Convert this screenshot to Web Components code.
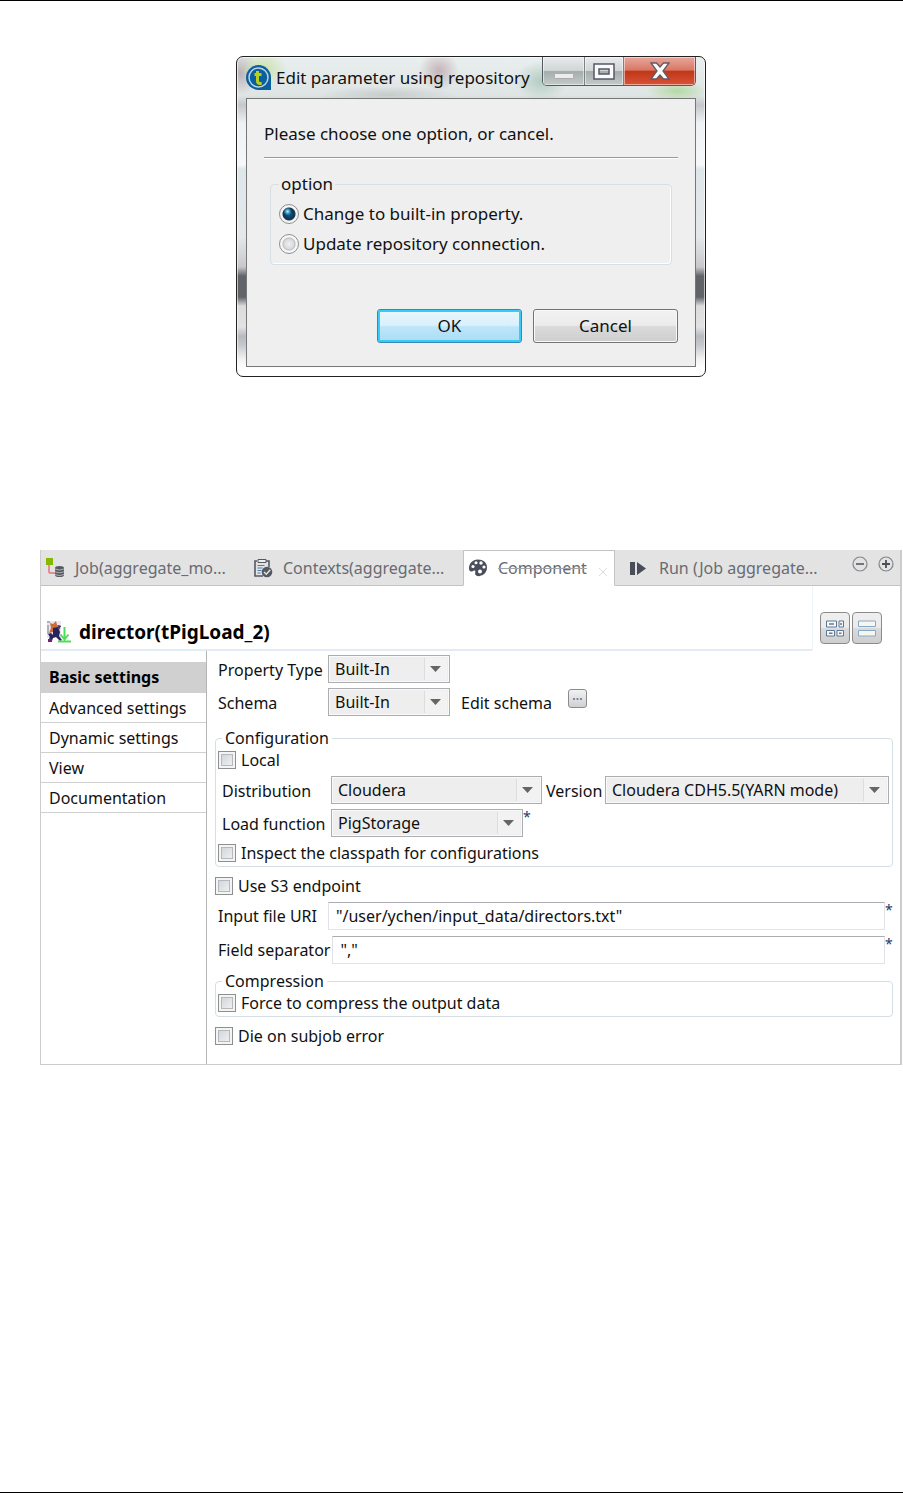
<!DOCTYPE html>
<html lang="en">
<head>
<meta charset="utf-8">
<title>Component settings</title>
<style>
    * { box-sizing: border-box; }
    body {
        margin: 0;
        background: #fff;
        color: #111;
        font-family: "Noto Sans", "Open Sans", sans-serif;
        font-size: 16px;
        line-height: 22px;
    }
</style>
</head>
<body>
<doc-page>
    <repo-dialog heading="Edit parameter using repository"></repo-dialog>
    <settings-panel></settings-panel>
</doc-page>

<script>
// every element gets an open shadow root with its own styles
class BaseElement extends HTMLElement {
    constructor() {
        super();
        this.attachShadow({ mode: 'open' });
    }

    connectedCallback() {
        this.shadowRoot.innerHTML = `
            <style>
                *, :host { box-sizing: border-box; }
                button, input, select { font: inherit; color: inherit; margin: 0; }
                svg { display: block; flex: none; }
                ${this.styles()}
            </style>
            ${this.markup()}
        `;
    }

    styles() { return ''; }
    markup() { return '<slot></slot>'; }
    attr(name) { return this.getAttribute(name) || ''; }
}

class DocPage extends BaseElement {
    styles() {
        return `
            :host {
                display: flex;
                flex-direction: column;
                gap: 173px;
                min-height: 100vh;
                padding: 55px 1px 0 40px;
                border-top: 1px solid #000;
                border-bottom: 1px solid #000;
            }
        `;
    }
}

class RepoDialog extends BaseElement {
    styles() {
        return `
            :host {
                display: block;
                width: 100%;
                max-width: 470px;
                margin: 0 auto;
                padding: 0 9px 9px;
                border: 1px solid #222;
                border-radius: 7px;
                font-size: 17px;
                background:
                    radial-gradient(ellipse 24px 18px at 26px 12px, #c9e2a9 0%, transparent 100%),
                    radial-gradient(ellipse 18px 22px at 4px 16px, #b9b0b8 0%, transparent 100%),
                    radial-gradient(ellipse 20px 20px at 202px 14px, #c4b4b8 0%, transparent 100%),
                    radial-gradient(ellipse 26px 20px at 304px 24px, #b2cdc2 0%, transparent 100%),
                    radial-gradient(ellipse 30px 10px at 440px 34px, #b3d9a2 0%, transparent 100%),
                    radial-gradient(ellipse 70px 9px at 150px 38px, #c6cccb 0%, transparent 100%),
                    linear-gradient(#e9eeee 0, #dfe5e4 38px, #c5c8ca 48px, #eff2f4 66px, #f5f7f8 108px,
                        #dfe6ea 112px, #e4e8ea 180px, #c8c8ca 210px, #626369 219px, #626369 240px,
                        #dcdcdc 249px, #e2e2e2 270px, #b7bbc0 279px, #c5c8cc 288px, #f2f2f2 302px, #fff 312px);
                box-shadow: inset 0 0 0 1px rgba(255, 255, 255, .6);
            }
            header { display: flex; align-items: flex-start; height: 41px; }
            .logo { margin: 8px 5px 0 0; }
            h2 { flex: 1; margin: 9px 0 0; font-size: 17px; line-height: 24px; font-weight: 400; color: #111; white-space: nowrap; }
            .caption {
                display: flex;
                height: 29px;
                border: 1px solid #555c60;
                border-top: 0;
                border-radius: 0 0 5px 5px;
                overflow: hidden;
            }
            .caption button {
                display: grid;
                place-items: center;
                width: 39px;
                padding: 0;
                border: 0;
                border-right: 1px solid #7b8184;
                background: linear-gradient(#e8ebeb 0, #d0d5d5 48%, #a5acad 52%, #c3cac9 100%);
                box-shadow: inset 0 0 0 1px rgba(255, 255, 255, .5);
            }
            .caption .min { width: 42px; }
            .caption .min svg { margin-top: 10px; }
            .caption .close {
                width: 71px;
                border-right: 0;
                background: linear-gradient(#e8a79b 0, #d97866 46%, #c03718 52%, #d95337 100%);
            }
            .client {
                border: 1px solid #777;
                background: #efefef;
                padding: 24px 17px 23px;
            }
            p { margin: 0 0 12px; }
            hr { margin: 0 0 15px; border: 0; border-top: 1px solid #999; box-shadow: 0 1px #fff; }
            .buttons { display: flex; justify-content: flex-end; gap: 11px; margin-top: 44px; }
            .buttons button {
                width: 145px;
                height: 34px;
                padding: 0;
                border: 1px solid #747474;
                border-radius: 3px;
                background: linear-gradient(#f2f2f2 0, #ebebeb 48%, #dadada 52%, #cecece 100%);
                box-shadow: inset 0 0 0 1px #f8f8f8;
            }
            .buttons .primary {
                border-color: #3c86b4;
                background: linear-gradient(#e9f6fd 0, #d9f0fc 48%, #bde6fa 52%, #abdcf4 100%);
                box-shadow: inset 0 0 0 2px #35cdf7;
            }
            option-group { margin: 0 6px; }
        `;
    }

    markup() {
        return `
            <header>
                <svg class="logo" width="25" height="25" viewBox="0 0 25 25">
                    <path d="M12.500 0A12.500 12.500 0 1 0 12.500 25H25V12.500A12.500 12.500 0 0 0 12.500 0Z" fill="#0b5f9d"/>
                    <circle cx="12.500" cy="12.500" r="9.500" fill="none" stroke="#b9d4e5" stroke-width="1.500"/>
                    <path d="M11.500 6v10q0 2.600 2.600 2.600h1.600M8.500 9.600h7" fill="none" stroke="#b7ce27" stroke-width="3"/>
                </svg>
                <h2>${this.attr('heading')}</h2>
                <div class="caption">
                    <button class="min" aria-label="Minimize">
                        <svg width="20" height="6" viewBox="0 0 20 6"><rect x=".5" y=".5" width="19" height="5" rx="1" fill="#ececec" stroke="#aaa"/></svg>
                    </button>
                    <button aria-label="Maximize">
                        <svg width="22" height="17" viewBox="0 0 22 17"><path d="M1 1h20v15H1zM6 6v5h10V6z" fill="#fafafa" fill-rule="evenodd" stroke="#565868" stroke-width="1.500"/></svg>
                    </button>
                    <button class="close" aria-label="Close">
                        <svg width="20" height="18" viewBox="0 0 20 18"><path d="M1 1h5.500L10 5l3.500-4H19l-6 8 6 8h-5.500L10 13l-3.500 4H1l6-8z" fill="#fafafa" stroke="#665965" stroke-width="1.300"/></svg>
                    </button>
                </div>
            </header>
            <div class="client">
                <p>Please choose one option, or cancel.</p>
                <hr>
                <option-group></option-group>
                <div class="buttons">
                    <button class="primary">OK</button>
                    <button>Cancel</button>
                </div>
            </div>
        `;
    }
}

class OptionGroup extends BaseElement {
    styles() {
        return `
            :host { display: block; }
            fieldset { margin: 0; padding: 4px 8px 5px; border: 1px solid #d5dfe5; border-radius: 4px; box-shadow: inset -1px -1px #fff; min-width: 0; }
            legend { padding: 0 2px; }
            label { display: flex; align-items: center; gap: 4px; height: 30px; }
            input {
                appearance: none;
                flex: none;
                width: 20px;
                height: 20px;
                border: 1px solid #8e8f8f;
                border-radius: 50%;
                background: radial-gradient(circle, #f0f0f0 0, #d8dadd 5px, #b9bcc0 6px, #f6f6f6 7px);
            }
            input:checked {
                background: radial-gradient(circle at 42% 36%, #b9eaf8 0, #3f9fc7 2px, transparent 4px),
                    radial-gradient(circle, #14608f 0, #0b3655 5px, #25384a 6px, #f4f4f4 7px);
            }
        `;
    }

    markup() {
        return `
            <fieldset>
                <legend>option</legend>
                <label><input type="radio" name="mode" checked>Change to built-in property.</label>
                <label><input type="radio" name="mode">Update repository connection.</label>
            </fieldset>
        `;
    }
}

class GroupBox extends BaseElement {
    styles() {
        return `
            :host { display: block; }
            fieldset { margin: 0; padding: 0 2px 2px; border: 1px solid #d5dfe5; border-radius: 4px; min-width: 0; }
            legend { margin-left: 4px; padding: 0 3px; }
            div { display: flex; flex-direction: column; gap: 5px; }
        `;
    }

    markup() {
        return `<fieldset><legend>${this.attr('label')}</legend><div><slot></slot></div></fieldset>`;
    }
}

class CheckField extends BaseElement {
    styles() {
        return `
            :host { display: block; }
            label { display: flex; align-items: center; gap: 5px; height: 22px; }
            input {
                appearance: none;
                flex: none;
                width: 18px;
                height: 18px;
                border: 1px solid #8e8f8f;
                background: linear-gradient(135deg, #cbcfd5, #f6f6f6);
                box-shadow: inset 0 0 0 2px #f4f4f4, inset 0 0 0 3px #b5b9be;
            }
        `;
    }

    markup() {
        return '<label><input type="checkbox"><span><slot></slot></span></label>';
    }
}

class ComboField extends BaseElement {
    styles() {
        return `
            :host { display: flex; align-items: center; min-width: 0; }
            label { flex: 0 0 var(--label, auto); white-space: nowrap; padding-top: 2px; }
            .box { flex: 1; display: grid; min-width: 0; }
            select, svg { grid-area: 1 / 1; }
            select {
                appearance: none;
                width: 100%;
                height: 28px;
                padding: 0 28px 1px 6px;
                border: 1px solid #abadb3;
                border-radius: 0;
                background: linear-gradient(90deg, #ddd 1px, #f2f2f2 1px) right 2px center / 23px 22px no-repeat, #eee;
                box-shadow: inset 0 0 0 1px #fafafa;
                color: #111;
            }
            svg { justify-self: end; align-self: center; margin-right: 9px; pointer-events: none; }
            sup { align-self: flex-start; width: 8px; font-size: 14px; line-height: 16px; color: #1c3a66; }
        `;
    }

    markup() {
        return `
            <label for="c">${this.attr('label')}</label>
            <div class="box">
                <select id="c"><option>${this.attr('value')}</option></select>
                <svg width="11" height="6" viewBox="0 0 11 6"><path d="M0 0h11L5.500 6z" fill="#666"/></svg>
            </div>
            ${this.hasAttribute('required') ? '<sup>*</sup>' : ''}
        `;
    }
}

class TextField extends BaseElement {
    styles() {
        return `
            :host { display: flex; align-items: center; padding-left: 3px; }
            label { flex: none; min-width: 110px; padding-right: 2px; white-space: nowrap; }
            input {
                flex: 1;
                min-width: 0;
                height: 28px;
                padding: 0 7px;
                border: 1px solid #e2e3ea;
                border-top-color: #abadb3;
                border-radius: 0;
                background: #fff;
            }
            sup { align-self: flex-start; width: 8px; font-size: 14px; line-height: 16px; color: #1c3a66; }
        `;
    }

    markup() {
        return `
            <label for="t">${this.attr('label')}</label>
            <input id="t" type="text" value="${this.attr('value').replace(/"/g, '&quot;')}">
            <sup>*</sup>
        `;
    }
}

class TabItem extends BaseElement {
    styles() {
        return `
            :host { display: block; flex: 0 1 auto; min-width: 0; border-bottom: 1px solid #c3c3c3; }
            :host([active]) { background: #fff; border: 1px solid #c3c3c3; border-bottom-color: #fff; }
            :host([grow]) { flex: 1 1 auto; }
            button {
                display: flex;
                align-items: center;
                gap: 10px;
                width: 100%;
                height: 100%;
                padding: 0 0 0 4px;
                border: 0;
                background: none;
                color: #686b72;
                text-align: left;
                white-space: nowrap;
            }
            :host([grow]) button { padding-left: 14px; }
            :host([active]) .text { text-decoration: line-through 1px #a2a5aa; }
            .x { margin: 8px 0 0 1px; }
        `;
    }

    markup() {
        const close = '<svg class="x" width="10" height="10" viewBox="0 0 10 10"><path d="M1 1l8 8M9 1L1 9" stroke="#ddd"/></svg>';
        return `
            <button role="tab">
                <slot name="icon"></slot>
                <span class="text"><slot></slot></span>
                ${this.hasAttribute('active') ? close : ''}
            </button>
        `;
    }
}

class TabBar extends BaseElement {
    styles() {
        return `
            :host { display: flex; height: 36px; background: #e3e3e3; }
            .job { flex-basis: 208px; }
            .contexts { flex-basis: 214px; }
            .component { flex-basis: 152px; }
            .tools { display: flex; align-items: flex-start; gap: 10px; padding: 6px 6px 0 0; border-bottom: 1px solid #c3c3c3; }
            .tools button { padding: 0; border: 0; background: none; }
        `;
    }

    markup() {
        return `
            <tab-item class="job">
                <svg slot="icon" width="20" height="20" viewBox="0 0 20 20">
                    <path d="M4 6v8q0 1 1 1h5" fill="none" stroke="#e0787a" stroke-width="1.500"/>
                    <rect x="1" y="0" width="7" height="7" fill="#84b900"/>
                    <path d="M10 10q0-2 4.500-2t4.500 2v7q0 2-4.500 2T10 17z" fill="#555963"/>
                    <path d="M10 11q4.500 2.200 9 0M10 13.800q4.500 2.200 9 0M10 16.500q4.500 2.200 9 0" fill="none" stroke="#c9cace" stroke-width=".8"/>
                </svg>
                Job(aggregate_mo...
            </tab-item>
            <tab-item class="contexts">
                <svg slot="icon" width="20" height="20" viewBox="0 0 20 20">
                    <path d="M4 3H2v15h8M13 3h3v6" fill="none" stroke="#555963" stroke-width="1.600"/>
                    <path d="M5 1.500h8v3H5z" fill="#eee" stroke="#555963"/>
                    <path d="M4.500 7.500h7M4.500 10h5M4.500 12.500h4M4.500 15h3" stroke="#4c7dac" stroke-width="1.200"/>
                    <circle cx="14" cy="14" r="5.300" fill="#555963"/>
                    <path d="M11 14l2.300 2.200 4-4.500" fill="none" stroke="#e3e3e3" stroke-width="1.500"/>
                </svg>
                Contexts(aggregate...
            </tab-item>
            <tab-item class="component" active>
                <svg slot="icon" width="20" height="20" viewBox="0 0 20 20">
                    <path d="M10 1.500C4 1.500 1 6 1 10c0 2 .6 3.500 2.200 3.500 2 0 2-1.500 3.500-1 1.600.6-.2 2.600.8 4.300 1 1.600 3.500 1.600 5.500.8 3.500-1.300 6-4 6-8.200 0-5-4-7.900-9-7.900z" fill="#4a4e5a"/>
                    <circle cx="5" cy="8.500" r="1.600" fill="#fff"/><circle cx="8" cy="4.800" r="1.500" fill="#fff"/>
                    <circle cx="13" cy="5" r="1.700" fill="#fff"/><circle cx="16" cy="9" r="1.600" fill="#fff"/>
                    <circle cx="12" cy="13.500" r="2" fill="#fff"/>
                </svg>
                Component
            </tab-item>
            <tab-item grow>
                <svg slot="icon" width="20" height="20" viewBox="0 0 20 20">
                    <path d="M1 4h5v13H1zM8 4l9 6.500L8 17z" fill="#4a4e5a"/>
                </svg>
                Run (Job aggregate...
            </tab-item>
            <div class="tools">
                <button aria-label="Collapse"><svg width="16" height="16" viewBox="0 0 16 16"><circle cx="8" cy="8" r="7" fill="none" stroke="#83868c" stroke-width="1.200"/><path d="M4 8h8" stroke="#666a71" stroke-width="1.800"/></svg></button>
                <button aria-label="Expand"><svg width="16" height="16" viewBox="0 0 16 16"><circle cx="8" cy="8" r="7" fill="none" stroke="#83868c" stroke-width="1.200"/><path d="M4 8h8M8 4v8" stroke="#4a4e5a" stroke-width="1.800"/></svg></button>
            </div>
        `;
    }
}

class PanelHeader extends BaseElement {
    styles() {
        return `
            :host { display: flex; height: 65px; }
            .title { flex: 1; display: flex; align-items: center; gap: 7px; padding: 28px 0 0 5px; border-bottom: 2px solid #e3ebf3; }
            h1 { margin: 0; font-size: 19px; line-height: 24px; font-weight: 700; color: #000; }
            .views { display: flex; gap: 2px; padding: 26px 18px 0 7px; border-left: 1px solid #eef3f8; }
            .views button {
                display: grid;
                place-items: center;
                width: 30px;
                height: 32px;
                padding: 0;
                border: 1px solid #8b8b8b;
                border-radius: 4px;
                background: linear-gradient(#efefef 0, #ebebeb 48%, #dadada 52%, #cecece 100%);
            }
        `;
    }

    markup() {
        return `
            <div class="title">
                <svg width="26" height="24" viewBox="0 0 26 24">
                    <path d="M1 1h14v17H1z" fill="#e9e5ec"/>
                    <path d="M1 2h3M2 5v9M3 17h3" stroke="#999db4" stroke-width="1.500"/>
                    <path d="M4 3l3 1 3-3 1 4 4 1-3 3-1 4-4-1-4 1 2-5z" fill="#cb6b38"/>
                    <path d="M7 8l5-1 2 5-1 4 3 4-2 1-4-4-3 1-1 3H2l2-4-2-3 3-1 2 2z" fill="#26235f"/>
                    <path d="M12 5l3 1-2 4z" fill="#30336f"/>
                    <path d="M2 19h4v3H2z" fill="#7e1d70"/>
                    <path d="M18.500 7v12M14.500 14.500l4 5 4-5M12 21.500h13" fill="none" stroke="#50dc58" stroke-width="2"/>
                </svg>
                <h1>director(tPigLoad_2)</h1>
            </div>
            <div class="views">
                <button aria-label="Grid view">
                    <svg width="18" height="17" viewBox="0 0 18 17"><path d="M.5 1h10v6H.5zM13 1h4.500v6H13zM.5 10.500h8v5.500h-8zM11 10.500h6.500v5.500H11z" fill="#f8f8f8" stroke="#58779c"/><path d="M3 4h5M15 3v2M3 13.200h3.500M13 13.200h2.500" stroke="#777" stroke-width="1.600"/></svg>
                </button>
                <button aria-label="List view">
                    <svg width="18" height="17" viewBox="0 0 18 17"><path d="M.5 1h17v5.500H.5zM.5 10.500h17V16H.5z" fill="#f8f7ed" stroke="#86a9cb"/></svg>
                </button>
            </div>
        `;
    }
}

class SideNav extends BaseElement {
    styles() {
        return `
            :host { display: block; padding-top: 11px; border-right: 1px solid #b5b5b5; }
            a {
                display: block;
                height: 30px;
                padding: 4px 8px 0;
                border-bottom: 1px solid #d0d0d0;
                color: inherit;
                text-decoration: none;
                white-space: nowrap;
            }
            a[aria-current] { height: 31px; background: #d0d0d0; font-weight: 700; color: #000; }
        `;
    }

    markup() {
        return `
            <nav>
                <a href="#basic" aria-current="page">Basic settings</a>
                <a href="#advanced">Advanced settings</a>
                <a href="#dynamic">Dynamic settings</a>
                <a href="#view">View</a>
                <a href="#documentation">Documentation</a>
            </nav>
        `;
    }
}

class SettingsForm extends BaseElement {
    styles() {
        return `
            :host { display: flex; flex-direction: column; padding: 4px 7px 17px 8px; min-width: 0; }
            .top { display: flex; flex-direction: column; gap: 5px; padding-left: 3px; margin-bottom: 11px; }
            .line { display: flex; align-items: center; }
            .top combo-field { width: 232px; --label: 110px; }
            .edit { padding: 2px 16px 0 11px; }
            .more {
                align-self: flex-start;
                display: grid;
                place-items: center;
                width: 19px;
                height: 19px;
                margin-top: 1px;
                padding: 0;
                border: 1px solid #8b8b8b;
                border-radius: 3px;
                background: linear-gradient(#f2f2f2, #d0d0d0);
            }
            .config { gap: 4px; padding: 0 1px 0 4px; }
            .dist { flex: 320 1 0; --label: 109px; }
            .version { flex: 343 1 0; --label: 59px; }
            .load { width: 313px; padding-left: 4px; --label: 109px; }
            .fields { display: flex; flex-direction: column; gap: 6px; margin: 5px 0 6px; }
            .after { margin-top: 8px; }
        `;
    }

    markup() {
        return `
            <div class="top">
                <combo-field label="Property Type" value="Built-In"></combo-field>
                <div class="line">
                    <combo-field label="Schema" value="Built-In"></combo-field>
                    <span class="edit">Edit schema</span>
                    <button class="more" aria-label="Edit schema">
                        <svg width="9" height="2" viewBox="0 0 9 2"><path d="M0 0h2v2H0zM3.500 0h2v2h-2zM7 0h2v2H7z" fill="#7a89a8"/></svg>
                    </button>
                </div>
            </div>
            <group-box label="Configuration">
                <check-field>Local</check-field>
                <div class="line config">
                    <combo-field class="dist" label="Distribution" value="Cloudera"></combo-field>
                    <combo-field class="version" label="Version" value="Cloudera CDH5.5(YARN mode)"></combo-field>
                </div>
                <combo-field class="load" label="Load function" value="PigStorage" required></combo-field>
                <check-field>Inspect the classpath for configurations</check-field>
            </group-box>
            <check-field class="after">Use S3 endpoint</check-field>
            <div class="fields">
                <text-field label="Input file URI" value='"/user/ychen/input_data/directors.txt"'></text-field>
                <text-field label="Field separator" value='","'></text-field>
            </div>
            <group-box label="Compression">
                <check-field>Force to compress the output data</check-field>
            </group-box>
            <check-field class="after">Die on subjob error</check-field>
        `;
    }
}

class SettingsPanel extends BaseElement {
    styles() {
        return `
            :host { display: block; border: 1px solid #ccc; border-top: 0; border-right-width: 2px; }
            .body { display: grid; grid-template-columns: 166px minmax(0, 1fr); }
        `;
    }

    markup() {
        return `
            <tab-bar role="tablist"></tab-bar>
            <panel-header></panel-header>
            <div class="body">
                <side-nav></side-nav>
                <settings-form></settings-form>
            </div>
        `;
    }
}

customElements.define('doc-page', DocPage);
customElements.define('repo-dialog', RepoDialog);
customElements.define('option-group', OptionGroup);
customElements.define('group-box', GroupBox);
customElements.define('check-field', CheckField);
customElements.define('combo-field', ComboField);
customElements.define('text-field', TextField);
customElements.define('tab-item', TabItem);
customElements.define('tab-bar', TabBar);
customElements.define('panel-header', PanelHeader);
customElements.define('side-nav', SideNav);
customElements.define('settings-form', SettingsForm);
customElements.define('settings-panel', SettingsPanel);
</script>
</body>
</html>
